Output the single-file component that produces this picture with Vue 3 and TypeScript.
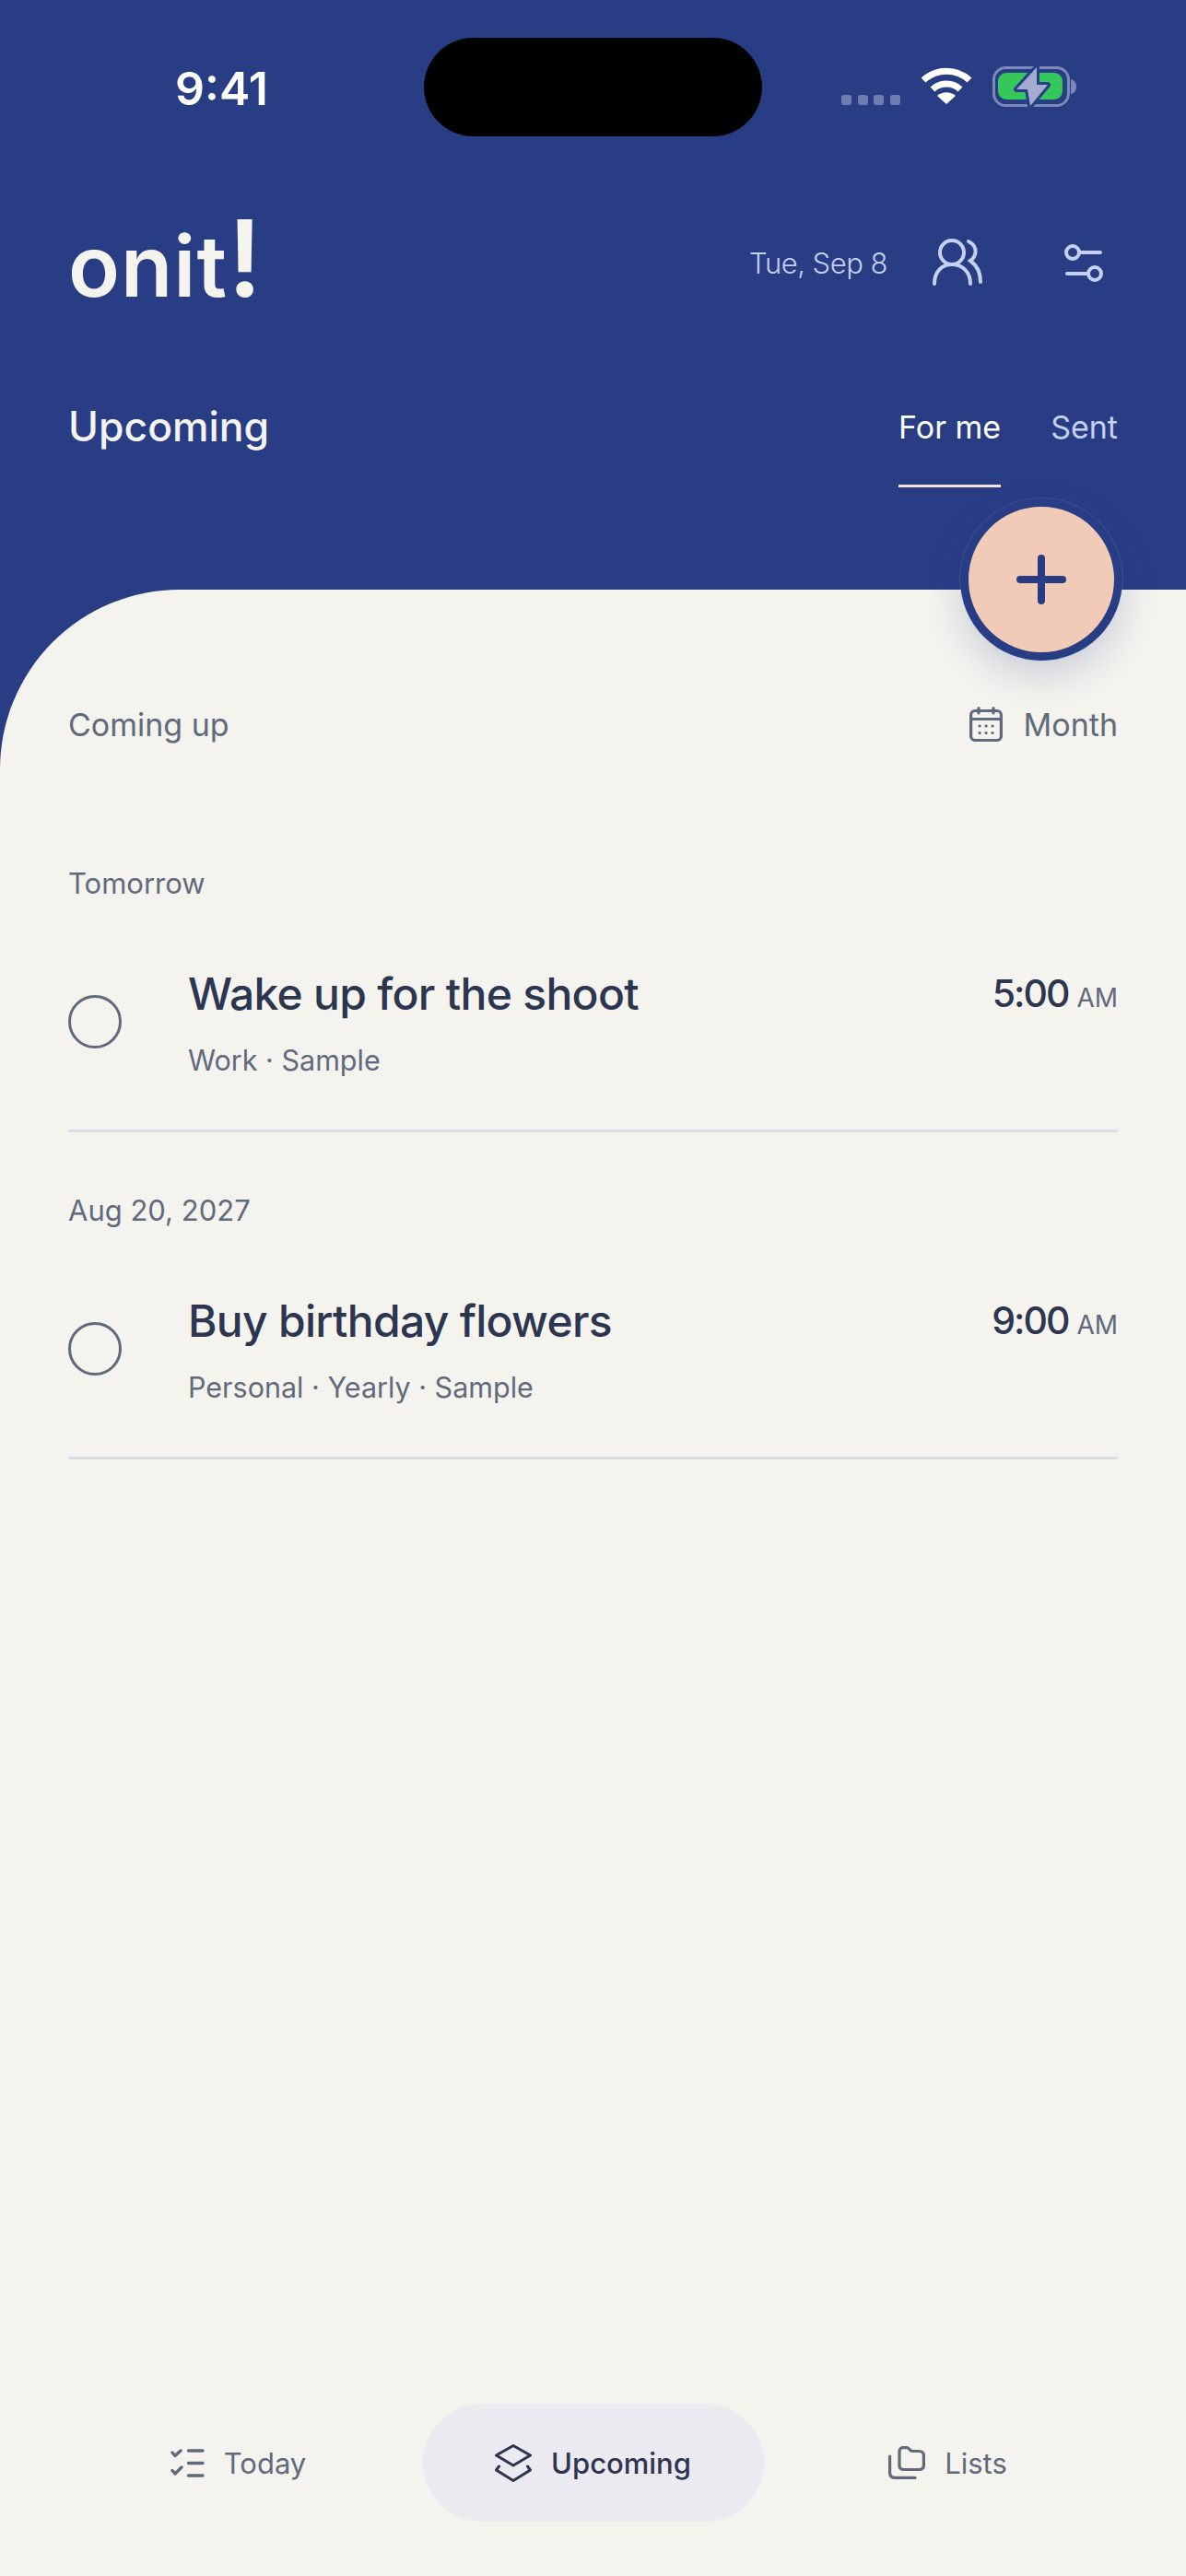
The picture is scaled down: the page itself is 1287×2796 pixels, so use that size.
<script setup lang="ts">
type Task = { date: string; title: string; meta: string; time: string }

const tasks: Task[] = [
  { date: 'Tomorrow', title: 'Wake up for the shoot', meta: 'Work · Sample', time: '5:00' },
  { date: 'Aug 20, 2027', title: 'Buy birthday flowers', meta: 'Personal · Yearly · Sample', time: '9:00' },
]
</script>

<template>
  <div class="screen">
    <header class="top">
      <div class="status">
        <span class="clock">9:41</span>
        <span class="island"></span>
        <div class="status-icons">
          <span class="signal"><i></i><i></i><i></i><i></i></span>
          <svg class="wifi" width="56" height="41" viewBox="0 0 56 41">
            <path d="M3 14 C17 1 39 1 53 14" fill="none" stroke="#fff" stroke-width="7" stroke-linejoin="round" />
            <path d="M13 24 C21 16 35 16 43 24" fill="none" stroke="#fff" stroke-width="7" />
            <path d="M28 40 L18 31 C24 26 32 26 38 31 Z" fill="#fff" />
          </svg>
          <svg class="battery" width="91" height="44" viewBox="0 0 91 44">
            <rect x="1.5" y="1.5" width="81" height="41" rx="13" fill="none" stroke="#7d89b8" stroke-width="3" />
            <rect x="6" y="7" width="70" height="29" rx="9" fill="#34c759" />
            <path d="M85 14 C89 15 91 18 91 22 C91 26 89 29 85 30 Z" fill="#7d89b8" />
            <path d="M48 1 L26 25 H38 L41 43 L60 20 H48 Z" fill="#a3acd0" stroke="#293d85" stroke-width="6" stroke-linejoin="round" paint-order="stroke" />
          </svg>
        </div>
      </div>

      <div class="brand-row">
        <span class="logo">onit<span class="bang">!</span></span>
        <div class="brand-tools">
          <span class="date">Tue, Sep 8</span>
          <svg class="tool-people" width="56" height="52" viewBox="0 0 56 52" fill="none" stroke="#c5cfee" stroke-width="4" stroke-linecap="round">
            <circle cx="22" cy="15" r="13" />
            <path d="M3 49 C3 36 11 28 22 28 C33 28 42 36 42 49" />
            <path d="M40 3 C46 6 48 10 47.5 15 C47 19 45 22 42 24 C49 29 53 37 53 47" />
          </svg>
          <svg class="tool-sliders" width="44" height="44" viewBox="0 0 44 44" fill="none" stroke="#c5cfee" stroke-width="4" stroke-linecap="round">
            <circle cx="9" cy="11" r="7" />
            <path d="M16 11 H39" />
            <circle cx="33" cy="34" r="7" />
            <path d="M3 34 H26" />
          </svg>
        </div>
      </div>

      <div class="title-row">
        <h1>Upcoming</h1>
        <nav class="tabs">
          <a class="tab active">For me</a>
          <a class="tab">Sent</a>
        </nav>
      </div>
    </header>

    <main class="sheet">
      <button class="fab" type="button">
        <svg width="56" height="56" viewBox="0 0 56 56" stroke="#293d85" stroke-width="8" stroke-linecap="round">
          <path d="M28 5 V51 M5 28 H51" />
        </svg>
      </button>

      <div class="sheet-head">
        <span>Coming up</span>
        <span class="month">
          <svg width="36" height="38" viewBox="0 0 36 38" fill="none" stroke="#5f6b7c" stroke-width="3.2" stroke-linecap="round">
            <rect x="1.6" y="4.5" width="32.8" height="32" rx="4.5" />
            <path d="M2 13.5 H34 M10 1.6 V7 M26 1.6 V7" />
            <path d="M11 21 h.1 M18 21 h.1 M25 21 h.1 M11 28.5 h.1 M18 28.5 h.1 M25 28.5 h.1" />
          </svg>
          Month
        </span>
      </div>

      <section v-for="task in tasks" :key="task.title" class="group">
        <h2>{{ task.date }}</h2>
        <div class="task">
          <span class="check"></span>
          <div class="task-body">
            <div class="task-title">{{ task.title }}</div>
            <div class="task-meta">{{ task.meta }}</div>
          </div>
          <div class="task-time">{{ task.time }} <small>AM</small></div>
        </div>
      </section>

      <nav class="bottom">
        <a class="bottom-item">
          <svg width="37" height="31" viewBox="0 0 37 31" fill="none" stroke="#5f6b7c" stroke-width="3.4" stroke-linecap="round" stroke-linejoin="round">
            <path d="M19.5 2 H35 M19.5 15.5 H35 M19.5 29 H35" />
            <path d="M2 4 L5 7.5 L11 2 M2 23.5 L5 27 L12 20" />
          </svg>
          Today
        </a>
        <a class="bottom-item current">
          <svg width="40" height="41" viewBox="0 0 40 41" fill="none" stroke="#2c3650" stroke-width="3" stroke-linecap="round" stroke-linejoin="round">
            <path d="M20 1.5 L38.5 12 L20 23 L1.5 12 Z" />
            <path d="M4.5 24 L1.5 28 L20 39.5 L38.5 28 L35.5 24" />
          </svg>
          Upcoming
        </a>
        <a class="bottom-item">
          <svg width="40" height="36" viewBox="0 0 40 36" fill="none" stroke="#5f6b7c" stroke-width="3.2" stroke-linecap="round" stroke-linejoin="round">
            <path d="M12 5.5 C12 3 14 1.6 16 1.6 H20 C23 1.6 23 5.5 26 5.5 H33 C36.5 5.5 38.4 7.5 38.4 10.5 V21 C38.4 24 36.5 25.5 33 25.5 H17 C14 25.5 12 24 12 21 Z" />
            <path d="M1.6 11 V29 C1.6 32.5 3.5 34.4 7 34.4 H29" />
          </svg>
          Lists
        </a>
      </nav>
    </main>
  </div>
</template>

<style>
body {
  margin: 0;
  background: #f4f3ee;
}
</style>

<style scoped>
.screen {
  display: flex;
  flex-direction: column;
  width: 1287px;
  height: 2796px;
  overflow: hidden;
  background: #293d85;
  font-family: Inter, "Noto Sans", sans-serif;
}

.top {
  height: 640px;
  flex: none;
  padding: 0 74px;
  box-sizing: border-box;
  color: #f4f3ee;
}

.status {
  display: flex;
  align-items: flex-start;
  height: 198px;
}
.clock {
  width: 270px;
  margin: 66px 0 0 116px;
  font-size: 50px;
  font-weight: 600;
  line-height: 60px;
  color: #fff;
}
.island {
  width: 367px;
  height: 107px;
  margin-top: 41px;
  border-radius: 54px;
  background: #000;
}
.status-icons {
  display: flex;
  align-items: flex-end;
  margin: 72px 0 0 86px;
}
.signal {
  display: flex;
  gap: 6.5px;
  margin: 0 22px 2px 0;
}
.signal i {
  width: 11px;
  height: 11px;
  border-radius: 3px;
  background: #6f7cae;
}
.wifi {
  margin: 0 22px 2px 0;
}

.brand-row {
  display: flex;
  align-items: center;
  justify-content: space-between;
  height: 174px;
}
.logo {
  margin-bottom: 2px;
  font-size: 92px;
  font-weight: 600;
  line-height: 100px;
  letter-spacing: 1px;
}
.bang {
  font-size: 116px;
  line-height: 100px;
  letter-spacing: 0;
}
.brand-tools {
  display: flex;
  align-items: center;
}
.date {
  margin-right: 48px;
  font-size: 31px;
  font-weight: 300;
  letter-spacing: -0.5px;
  color: #c5cfee;
}
.tool-people {
  margin-right: 88px;
}
.tool-sliders {
  margin-right: 14px;
}

.title-row {
  display: flex;
  justify-content: space-between;
  align-items: flex-start;
  margin-top: 71px;
}
h1 {
  margin: 0;
  font-size: 44.5px;
  font-weight: 500;
  line-height: 41px;
}
.tabs {
  display: flex;
  gap: 54px;
}
.tab {
  padding-bottom: 42px;
  font-size: 34px;
  line-height: 41px;
  color: #c5cfee;
  border-bottom: 3px solid transparent;
}
.tab.active {
  color: #fff;
  border-bottom-color: #f6e3da;
}

.sheet {
  position: relative;
  display: flex;
  flex-direction: column;
  flex: 1;
  padding: 0 74px 59px;
  border-top-left-radius: 195px;
  background: #f4f3ee;
  color: #2c3650;
}
.fab {
  position: absolute;
  right: 69px;
  top: -99px;
  display: flex;
  align-items: center;
  justify-content: center;
  width: 176px;
  height: 176px;
  padding: 0;
  border: 9px solid #293d85;
  border-radius: 50%;
  background: #f2cbb8;
  box-shadow: 0 16px 40px rgba(41, 61, 133, 0.2), 0 0 0 1px rgba(170, 180, 220, 0.18);
}

.sheet-head {
  display: flex;
  justify-content: space-between;
  align-items: center;
  height: 90px;
  margin: 101px 0 109px;
  font-size: 34px;
  color: #5f6b7c;
}
.month {
  display: flex;
  align-items: center;
  gap: 23px;
}

.group {
  margin-bottom: 66px;
}
h2 {
  margin: 0;
  font-size: 31px;
  font-weight: 400;
  line-height: 38px;
  color: #5f6b7c;
}
.task {
  display: flex;
  padding: 72px 0 56px;
  border-bottom: 3px solid #dcdce6;
}
.check {
  flex: none;
  box-sizing: border-box;
  width: 58px;
  height: 58px;
  margin: 30px 72px 0 0;
  border: 3px solid #5f6b7c;
  border-radius: 50%;
}
.task-body {
  flex: 1;
}
.task-title {
  font-size: 48px;
  font-weight: 500;
  line-height: 58px;
  letter-spacing: -0.7px;
}
.task-meta {
  margin-top: 24px;
  font-size: 30.5px;
  line-height: 38px;
  color: #5f6b7c;
}
.task-time {
  margin-top: 3px;
  font-size: 41px;
  font-weight: 450;
  line-height: 50px;
  letter-spacing: -2px;
}
.task-time small {
  font-size: 28px;
  font-weight: 400;
  letter-spacing: 0;
  color: #5f6b7c;
}

.bottom {
  display: grid;
  grid-template-columns: 340px 370px 340px;
  justify-content: center;
  column-gap: 30px;
  margin-top: auto;
}
.bottom-item {
  display: flex;
  align-items: center;
  justify-content: center;
  gap: 21px;
  height: 128px;
  border-radius: 64px;
  font-size: 31px;
  color: #5f6b7c;
}
.bottom-item.current {
  background: #eaeaf0;
  color: #2c3650;
  font-weight: 500;
}
</style>
